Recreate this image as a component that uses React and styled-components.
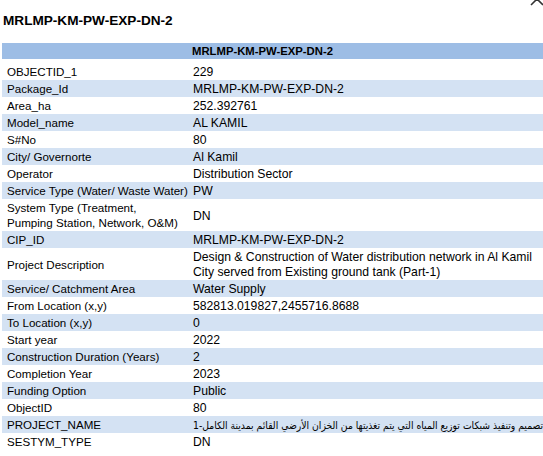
import styled, { createGlobalStyle } from 'styled-components';

const rows = [
  ['OBJECTID_1', '229'],
  ['Package_Id', 'MRLMP-KM-PW-EXP-DN-2'],
  ['Area_ha', '252.392761'],
  ['Model_name', 'AL KAMIL'],
  ['S#No', '80'],
  ['City/ Governorte', 'Al Kamil'],
  ['Operator', 'Distribution Sector'],
  ['Service Type (Water/ Waste Water)', 'PW'],
  [<>System Type (Treatment,<br />Pumping Station, Network, O&amp;M)</>, 'DN'],
  ['CIP_ID', 'MRLMP-KM-PW-EXP-DN-2'],
  ['Project Description', 'Design & Construction of Water distribution network in Al Kamil City served from Existing ground tank (Part-1)'],
  ['Service/ Catchment Area', 'Water Supply'],
  ['From Location (x,y)', '582813.019827,2455716.8688'],
  ['To Location (x,y)', '0'],
  ['Start year', '2022'],
  ['Construction Duration (Years)', '2'],
  ['Completion Year', '2023'],
  ['Funding Option', 'Public'],
  ['ObjectID', '80'],
  ['PROJECT_NAME', 'تصميم وتنفيذ شبكات توزيع المياه التي يتم تغذيتها من الخزان الأرضي القائم بمدينة الكامل-1', true],
  ['SESTYM_TYPE', 'DN'],
];

const App = () => {
  return (
    <Popup>
      <GlobalStyle />
      <Close aria-label="close">
        <svg width="14" height="14" viewBox="0 0 14 14">
          <path d="M1 1 L13 13 M13 1 L1 13" stroke="#333" strokeWidth="1.6" fill="none" />
        </svg>
      </Close>
      <Title>MRLMP-KM-PW-EXP-DN-2</Title>
      <Table>
        <colgroup>
          <col style={{ width: 188 }} />
          <col />
        </colgroup>
        <thead>
          <tr>
            <HeadCell colSpan={2}>MRLMP-KM-PW-EXP-DN-2</HeadCell>
          </tr>
        </thead>
        <tbody>
          {rows.map(([label, value, arabic], i) => (
            <Row key={i} striped={i % 2 === 1}>
              <Label>{label}</Label>
              <Value arabic={arabic}>{value}</Value>
            </Row>
          ))}
        </tbody>
      </Table>
    </Popup>
  );
};

const GlobalStyle = createGlobalStyle`
  html, body {
    margin: 0;
    padding: 0;
    background: #fff;
    overflow: hidden;
  }
  body {
    font-family: "Liberation Sans", Arial, sans-serif;
    color: #000;
  }
`;

const Popup = styled.div`
  position: relative;
  width: 543px;
  height: 456px;
  padding: 0 0 0 2px;
  box-sizing: border-box;
  overflow: hidden;
`;

const Close = styled.div`
  position: absolute;
  top: -8px;
  right: -1px;
  width: 14px;
  height: 14px;
`;

const Title = styled.h3`
  margin: 0;
  padding: 12px 0 0 1px;
  font-size: 13.6px;
  line-height: 18px;
  font-weight: bold;
`;

const Table = styled.table`
  margin-top: 13px;
  width: 541px;
  table-layout: fixed;
  border-collapse: collapse;
  line-height: 15px;
`;

const HeadCell = styled.th`
  background: #9dbde5;
  height: 16px;
  padding: 0 20px 0 0;
  font-size: 11.3px;
  font-weight: bold;
  text-align: center;
  line-height: 16px;
  border-bottom: 4px solid #fff;
`;

const Row = styled.tr`
  background: ${p => (p.striped ? '#d4e2f3' : '#fff')};

  td {
    vertical-align: middle;
  }
`;

const Label = styled.td`
  padding: 1px 0 1px 5px;
  font-size: 11.6px;
`;

const Value = styled.td`
  padding: 2px 2px 0 3px;
  white-space: ${p => (p.arabic ? 'nowrap' : 'normal')};
  overflow: hidden;
  font-family: ${p => (p.arabic ? '"DejaVu Sans Condensed", "DejaVu Sans", sans-serif' : 'inherit')};
  font-size: ${p => (p.arabic ? '10.3px' : '12.2px')};
`;

export default App;
